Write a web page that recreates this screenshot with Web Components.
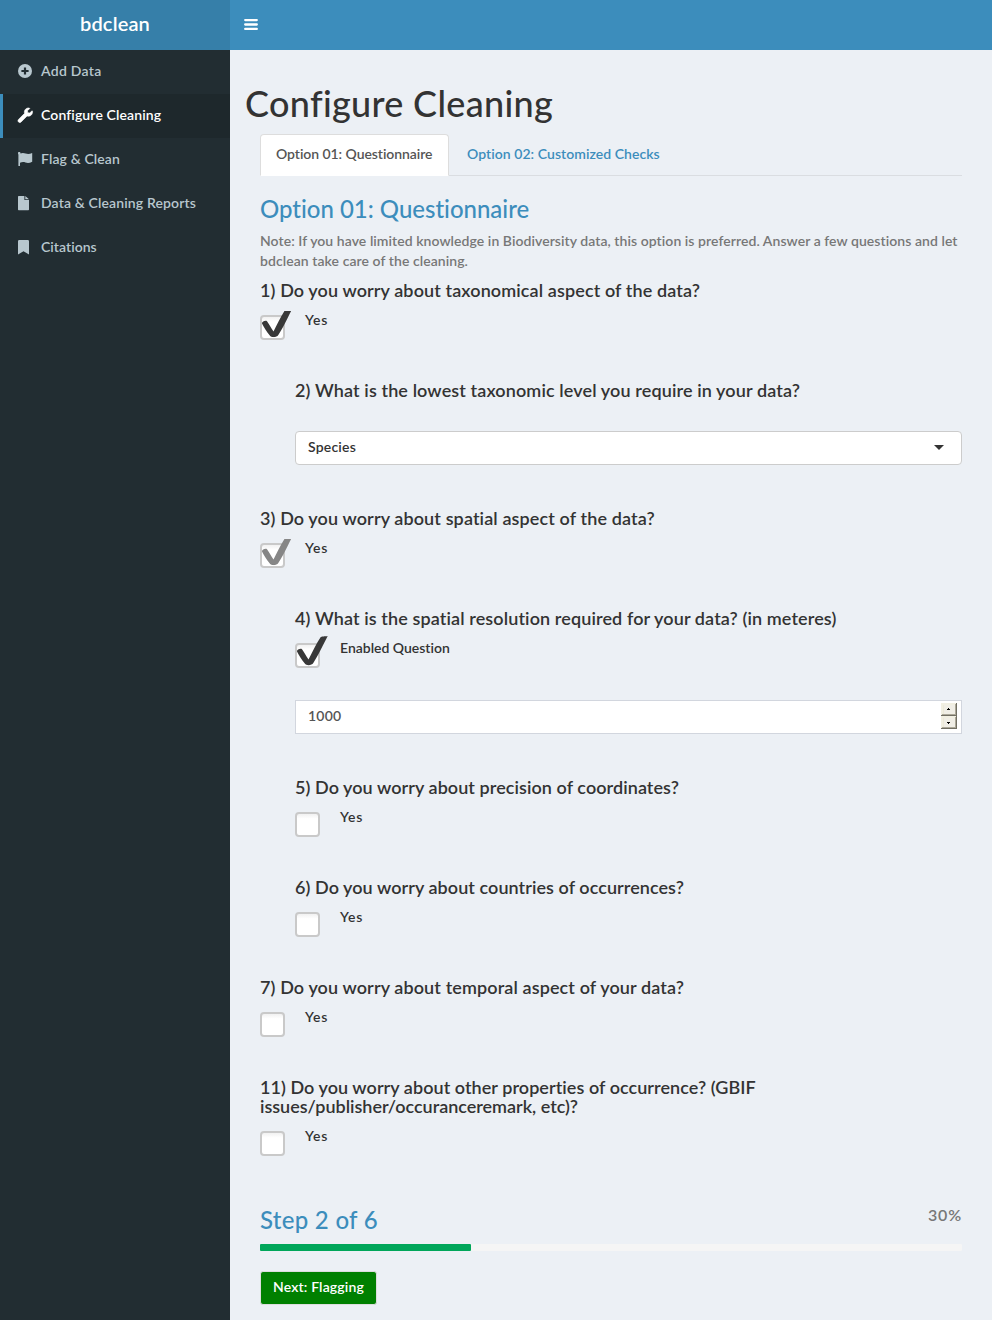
<!DOCTYPE html>
<html lang="en">
<head>
<meta charset="utf-8">
<title>bdclean</title>
<style>
html,body{margin:0;height:100%}
body{font-family:Lato,"Open Sans",sans-serif;font-weight:600;font-size:14px;line-height:20px;color:#333;background:#ecf0f5}
</style>
</head>
<body>
<bd-app></bd-app>
<script>
const define = (name, html, setup) => {
  const template = document.createElement('template');
  template.innerHTML = html;
  customElements.define(name, class extends HTMLElement {
    connectedCallback() {
      if (this.shadowRoot) return;
      this.attachShadow({mode: 'open'}).append(template.content.cloneNode(true));
      if (setup) setup(this, this.shadowRoot);
    }
  });
};

/* A line of text whose tracking is adjusted to a given measure. */
define('bd-text', `<style>:host{display:inline-block;white-space:nowrap;vertical-align:top}</style><slot></slot>`, el => {
  const target = +el.getAttribute('w');
  if (!target) return;
  const width = el.getBoundingClientRect().width;
  el.style.letterSpacing = ((target - width) / el.textContent.length) + 'px';
});

const icons = {
  plus: '<circle cx="7" cy="7" r="7"/><path d="M7 3.4v7.2M3.4 7h7.2" stroke="var(--hole,#222d32)" stroke-width="2.2"/>',
  wrench: '<path transform="scale(.02834)" stroke="currentColor" stroke-width="22" d="M507.7 109.1c-2.2-9-13.5-12.1-20.1-5.5l-74.4 74.4-67.9-11.3L334 98.9l74.4-74.4c6.6-6.6 3.4-17.9-5.7-20.2-47.4-11.7-99.6.9-136.6 37.9-39.6 39.6-50.5 97.1-34.1 147.2L18.7 402.8c-25 25-25 65.5 0 90.5 25 25 65.5 25 90.5 0l213.2-213.2c50.1 16.7 107.5 5.7 147.4-34.2 37.1-37.1 49.7-89.3 37.9-136.8z"/>',
  flag: '<path d="M.4 0H2v14H.4zM2 1.7C4 .7 5.7.8 7.6 1.5c2.2.8 4 .6 6.6-.4v8.6c-2.5 1.4-4.6 1.5-6.7.8-2-.7-3.5-.6-5.5.2z"/><circle cx="1.3" cy="1.2" r="1.2"/>',
  file: '<path d="M.7 0H6.4V4H11v9.6a.7.7 0 0 1-.7.7H.7a.7.7 0 0 1-.7-.7V.7A.7.7 0 0 1 .7 0zM7.3 0 11 3.2H7.3z"/>',
  bookmark: '<path d="M1.2 0h8.6A1.2 1.2 0 0 1 11 1.2V14.5L5.5 11.3 0 14.5V1.2A1.2 1.2 0 0 1 1.2 0z"/>'
};

define('bd-nav-item', `<style>
:host{display:flex;align-items:center;height:44px;box-sizing:border-box;border-left:3px solid transparent;padding:0 0 2px 15px;color:#b8c7ce}
:host([active]){background:#1e282c;border-color:#3c8dbc;color:#fff}
svg{width:15px;height:15px;margin:0 8.3px 0 -.3px;fill:currentColor;overflow:visible;flex:none}
</style><svg viewBox="0 0 15 15"></svg><slot></slot>`, (el, root) => {
  root.querySelector('svg').innerHTML = icons[el.getAttribute('icon')];
});

define('bd-header', `<style>
:host{display:flex;height:50px;background:#3c8dbc;color:#fff}
.logo{width:230px;background:#367fa9;text-align:center;font-size:20px;line-height:47px}
svg{margin:18px 0 0 14px;width:14px;height:13px}
</style><div class="logo"><bd-text w="70">bdclean</bd-text></div>
<svg viewBox="0 0 14 13"><path d="M1.2 2.1h11.6M1.2 6.5h11.6M1.2 10.9h11.6" stroke="#fff" stroke-width="2.3" stroke-linecap="round"/></svg>`);

define('bd-sidebar', `<style>:host{display:block;width:230px;flex:none;background:#222d32}</style>
<bd-nav-item icon="plus"><bd-text w="60.5">Add Data</bd-text></bd-nav-item>
<bd-nav-item icon="wrench" active><bd-text w="120">Configure Cleaning</bd-text></bd-nav-item>
<bd-nav-item icon="flag"><bd-text w="79">Flag &amp; Clean</bd-text></bd-nav-item>
<bd-nav-item icon="file"><bd-text w="155">Data &amp; Cleaning Reports</bd-text></bd-nav-item>
<bd-nav-item icon="bookmark"><bd-text w="56">Citations</bd-text></bd-nav-item>`);

define('bd-tabs', `<style>
:host{display:flex;height:42px;box-sizing:border-box;border-bottom:1px solid #dadde1}
div{box-sizing:border-box;height:42px;padding:9px 15px;border:1px solid transparent;color:#3c8dbc;margin-right:2px}
.on{width:189px;color:#555;background:#fff;border-color:#ddd;border-bottom-color:#fff;border-radius:4px 4px 0 0}
</style><div class="on"><bd-text w="157">Option 01: Questionnaire</bd-text></div><div><bd-text w="193">Option 02: Customized Checks</bd-text></div>`);

/* Checkbox with an oversized tick; mark = full | cut | dim. */
define('bd-check', `<style>
:host{display:flex;height:20px;margin-top:9.3px}
svg{width:25px;height:25px;margin:5px 20px 0 0;overflow:visible;flex:none}
svg g{display:none}
:host([mark]) g{display:block}
:host([mark=cut]) g,:host([mark=dim]) g{clip-path:inset(3px 0 0 0)}
:host([mark=dim]) path{fill:#868686}
</style><svg viewBox="0 0 25 25"><defs><linearGradient id="s" x2="0" y2="1"><stop stop-color="#eee"/><stop offset=".25" stop-color="#fff"/></linearGradient></defs>
<rect x="1" y="1" width="23" height="23" rx="3" fill="url(#s)" stroke="#c9c9c9" stroke-width="2"/>
<g><path fill="#383838" d="M2 8.4C1.8 6.7 5.6 5 7 6.3 9 9 11 13 13.5 16.4 17 10 21 1 25.4-5.5 26.5-7 30-6.5 32.7-7 29 0 23 13 18.3 20 16.8 22.6 11.4 23 9.8 20.5 7 17 3.5 11.5 2 8.4Z"/></g></svg><slot></slot>`);

define('bd-question', `<style>
:host{display:block;height:var(--h,100px);box-sizing:border-box}
:host([nested]){margin-left:35px}
h4{margin:0;font:inherit;font-size:18px;line-height:19.4px;display:flex;flex-direction:column;align-items:flex-start}
</style><h4><slot name="title"></slot></h4><slot></slot>`);

define('bd-select', `<style>
:host{display:flex;align-items:center;justify-content:space-between;box-sizing:border-box;height:34px;margin-top:30.6px;padding:0 17px 1px 12px;background:#fff;border:1px solid #ccc;border-radius:4px}
svg{width:10px;height:5px}
::slotted(*){margin-top:-1px}
</style><slot></slot><svg viewBox="0 0 10 5"><path d="M0 0h10L5 5z" fill="#333"/></svg>`);

define('bd-number', `<style>
:host{display:flex;align-items:center;justify-content:space-between;box-sizing:border-box;height:34px;margin-top:42.3px;padding:0 4px 2px 12px;background:#fff;border:1px solid #d2d6de;color:#555}
svg{width:16px;height:26px;margin-top:-1px}
</style><slot></slot><svg viewBox="0 0 16 26" shape-rendering="crispEdges">
<g id="b"><path d="M0 0h16v13H0z" fill="#716f64"/><path d="M0 0h15v12H0z" fill="#f1efe2"/><path d="M1 11h13V1h1v11H1z" fill="#aca899"/><path d="M2 2h12v9H2z" fill="#ece9d8"/><path d="M3 2h11v9H3z" fill="#f0eee6"/></g>
<use href="#b" y="13"/><path d="M7 5h1v1h1v1H6V6h1zM6 19h3v1H8v1H7v-1H6z" fill="#000"/></svg>`);

define('bd-progress', `<style>
:host{display:block;height:7px;background:#f5f5f5;border-radius:1px}
div{height:7px;width:211px;background:#00a65a;border-radius:1px}
</style><div></div>`);

define('bd-button', `<style>
:host{display:inline-block;box-sizing:border-box;height:34px;margin-top:20px;border:1px solid #ddd;border-radius:3px;padding:5px 12px 7px;background:green;color:#fff}
</style><slot></slot>`);

define('bd-app', `<style>
:host{display:flex;flex-direction:column;height:1320px;overflow:hidden}
.body{display:flex;flex:1;min-height:0}
main{flex:1;padding:33px 30px 0}
h1{font-size:36px;font-weight:500;line-height:40px;margin:0 0 11px -15px;height:40px}
h3{font-size:24px;font-weight:500;line-height:26px;margin:0;color:#3c8dbc}
h1,h3{display:flex}
.note{color:#777;margin:9px 0 10px;display:flex;flex-direction:column;align-items:flex-start}
.step{display:flex;justify-content:space-between;height:37px;margin-top:10px}
.pct{font-size:16px;color:#777;margin-top:-2px}
</style>
<bd-header></bd-header>
<div class="body"><bd-sidebar></bd-sidebar><main>
<h1><bd-text w="307.5">Configure Cleaning</bd-text></h1>
<bd-tabs></bd-tabs>
<h3 style="margin-top:20px"><bd-text w="270">Option 01: Questionnaire</bd-text></h3>
<div class="note"><bd-text w="698">Note: If you have limited knowledge in Biodiversity data, this option is preferred. Answer a few questions and let</bd-text><bd-text w="208">bdclean take care of the cleaning.</bd-text></div>
<bd-question><bd-text slot="title" w="440">1) Do you worry about taxonomical aspect of the data?</bd-text><bd-check mark="cut"><bd-text w="23">Yes</bd-text></bd-check></bd-question>
<bd-question nested style="--h:128px"><bd-text slot="title" w="505">2) What is the lowest taxonomic level you require in your data?</bd-text><bd-select><bd-text w="48">Species</bd-text></bd-select></bd-question>
<bd-question><bd-text slot="title" w="395">3) Do you worry about spatial aspect of the data?</bd-text><bd-check mark="dim"><bd-text w="23">Yes</bd-text></bd-check></bd-question>
<bd-question nested style="--h:169px"><bd-text slot="title" w="542">4) What is the spatial resolution required for your data? (in meteres)</bd-text><bd-check mark="full"><bd-text w="110">Enabled Question</bd-text></bd-check><bd-number><bd-text w="33.5">1000</bd-text></bd-number></bd-question>
<bd-question nested><bd-text slot="title" w="384">5) Do you worry about precision of coordinates?</bd-text><bd-check><bd-text w="23">Yes</bd-text></bd-check></bd-question>
<bd-question nested><bd-text slot="title" w="389">6) Do you worry about countries of occurrences?</bd-text><bd-check><bd-text w="23">Yes</bd-text></bd-check></bd-question>
<bd-question><bd-text slot="title" w="424">7) Do you worry about temporal aspect of your data?</bd-text><bd-check><bd-text w="23">Yes</bd-text></bd-check></bd-question>
<bd-question style="--h:119px"><bd-text slot="title" w="496">11) Do you worry about other properties of occurrence? (GBIF</bd-text><bd-text slot="title" w="318">issues/publisher/occuranceremark, etc)?</bd-text><bd-check><bd-text w="23">Yes</bd-text></bd-check></bd-question>
<div class="step"><h3><bd-text w="118">Step 2 of 6</bd-text></h3><div class="pct"><bd-text w="34">30%</bd-text></div></div>
<bd-progress></bd-progress>
<bd-button><bd-text w="91">Next: Flagging</bd-text></bd-button>
</main></div>`);
</script>
</body>
</html>
